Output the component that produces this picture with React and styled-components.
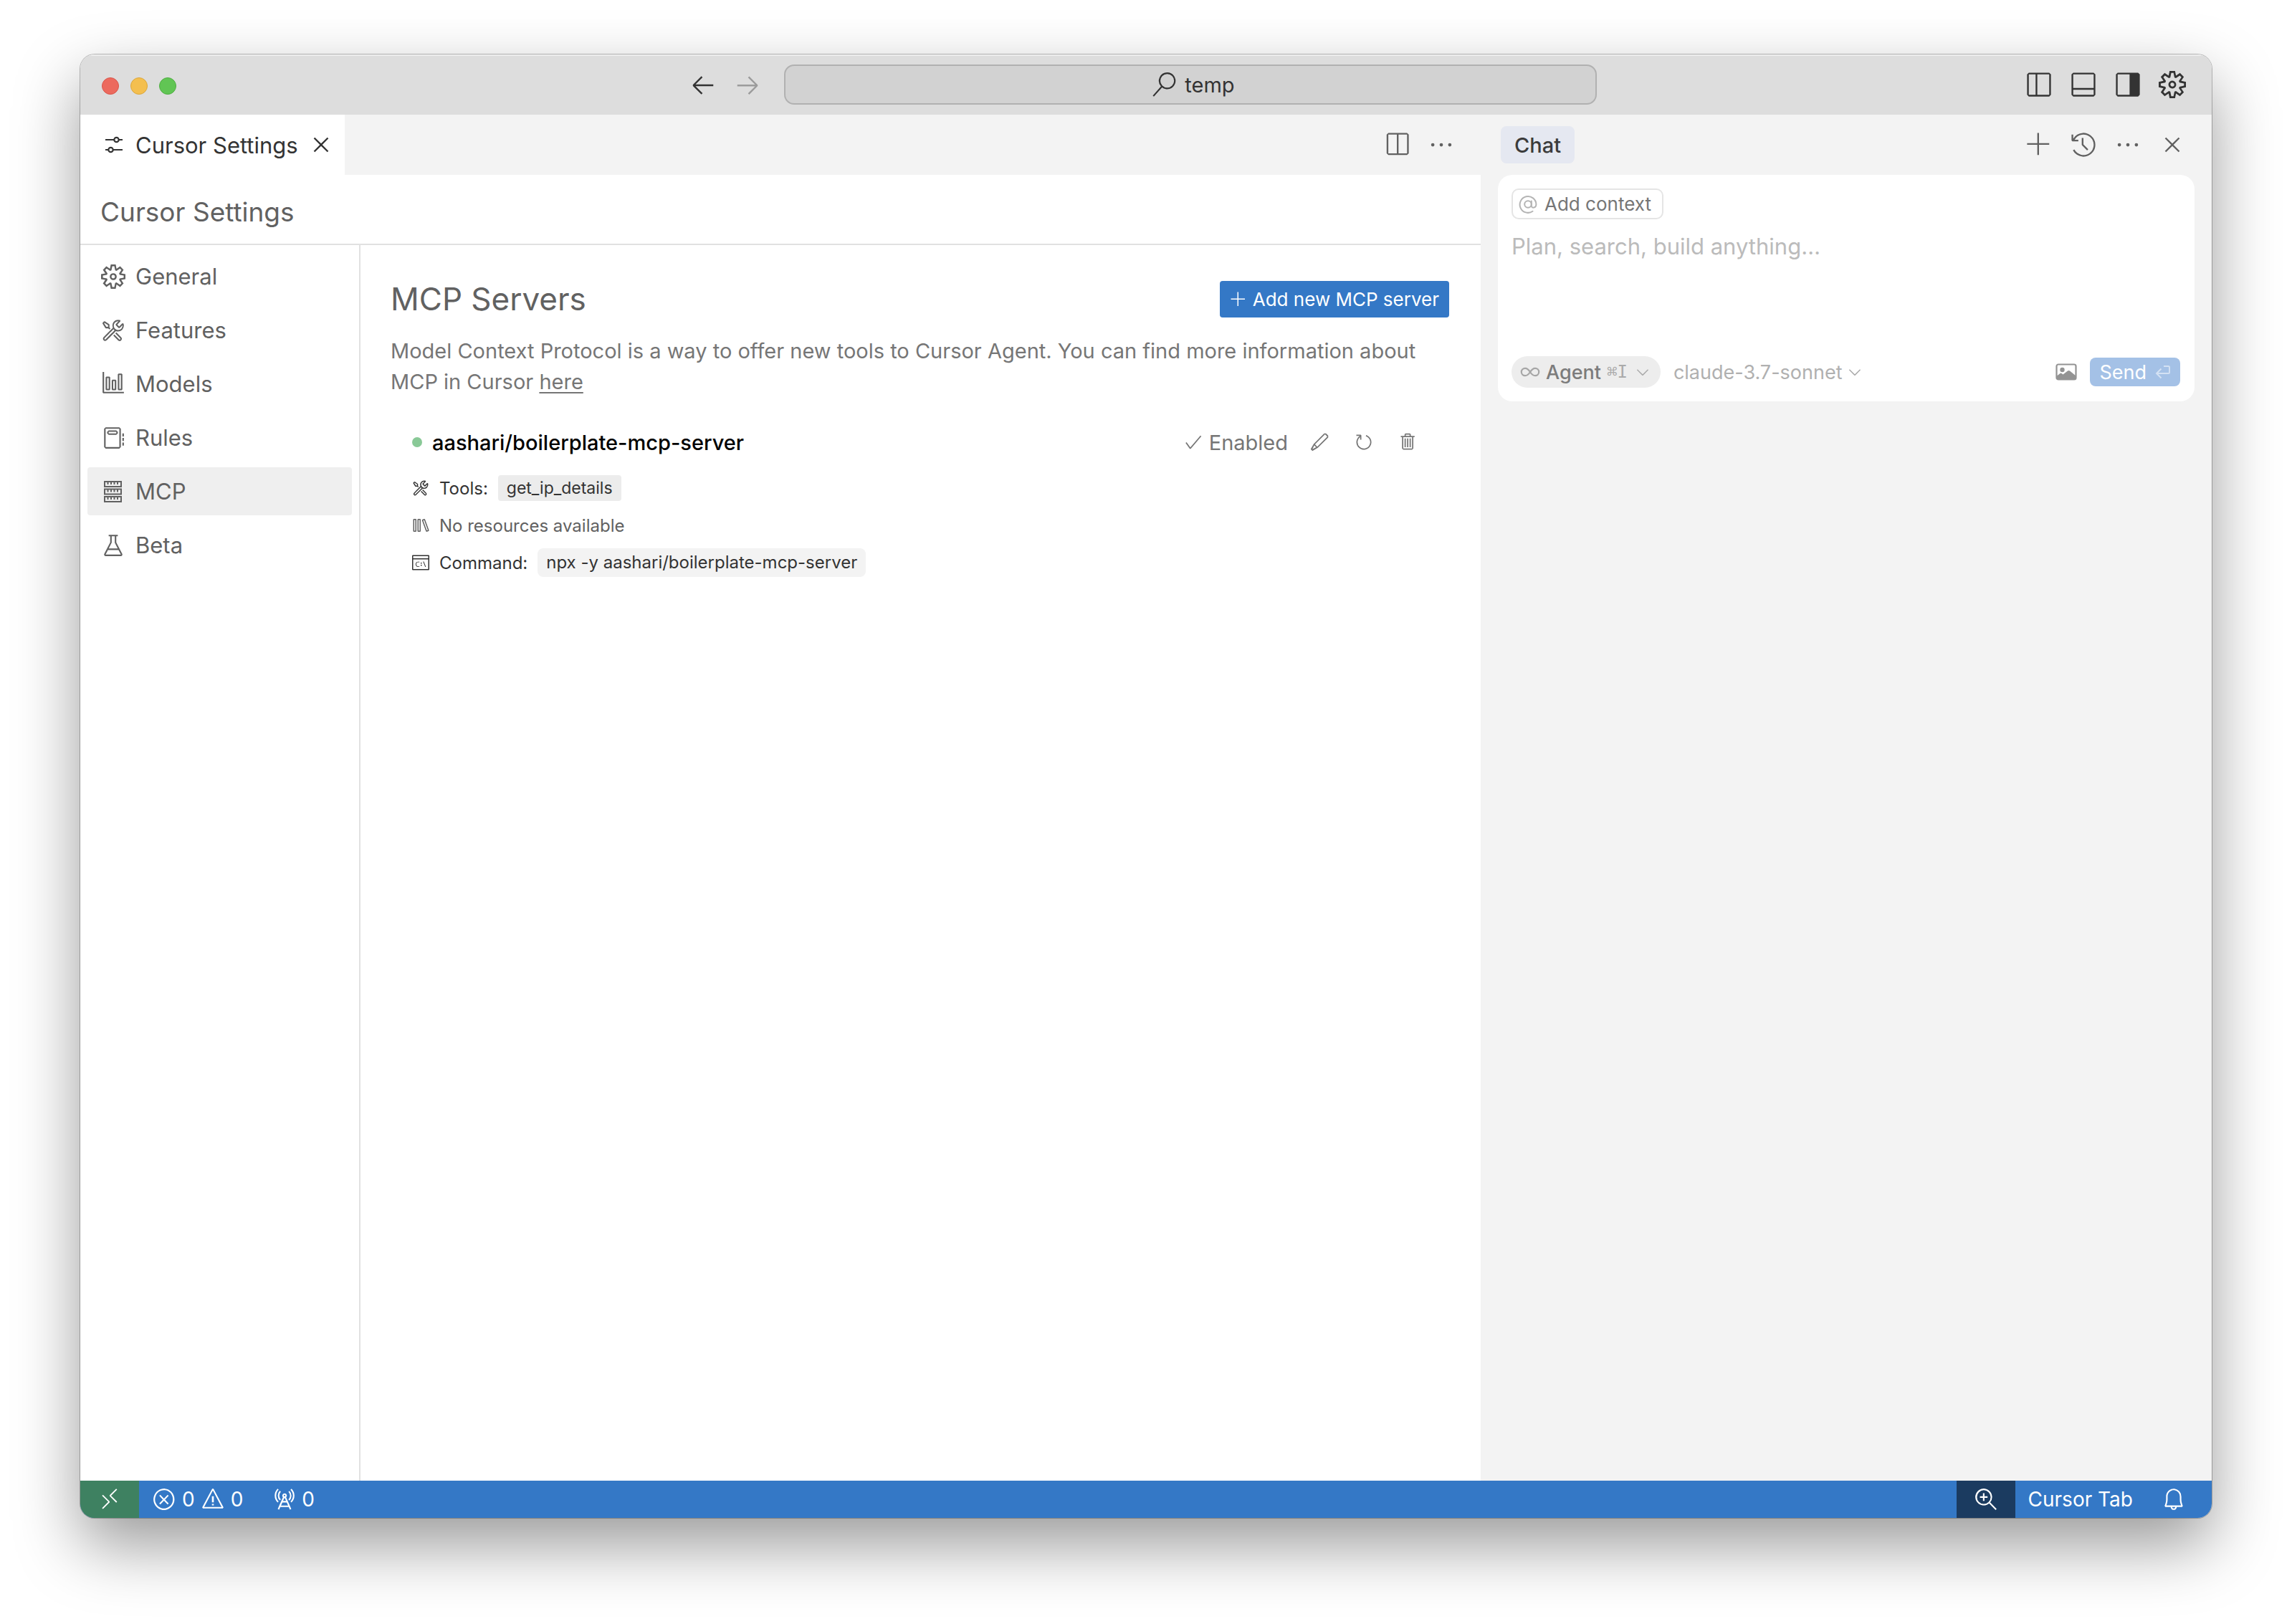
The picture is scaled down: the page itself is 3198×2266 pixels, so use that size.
import React from "react";
import styled, { createGlobalStyle } from "styled-components";
import {
  VscAdd,
  VscArrowLeft,
  VscArrowRight,
  VscBeaker,
  VscBell,
  VscCheck,
  VscChevronDown,
  VscClose,
  VscEdit,
  VscEllipsis,
  VscError,
  VscGraph,
  VscHistory,
  VscLayoutPanelOff,
  VscLayoutSidebarLeftOff,
  VscLayoutSidebarRight,
  VscLibrary,
  VscNotebook,
  VscRadioTower,
  VscRemote,
  VscSearch,
  VscSettingsGear,
  VscSplitHorizontal,
  VscTerminalCmd,
  VscTools,
  VscTrash,
  VscWarning,
  VscZoomIn,
} from "react-icons/vsc";

const color = {
  ink: "#333333",
  text: "#616161",
  muted: "#767676",
  faint: "#bbbbbb",
  line: "#e1e1e1",
  chrome: "#dddddd",
  panel: "#f3f3f3",
  blue: "#3478c6",
};

const GlobalStyle = createGlobalStyle`
  *, *::before, *::after { box-sizing: border-box; }
  body {
    margin: 0;
    background: #ffffff;
    font-family: Inter, "Noto Sans", sans-serif;
    font-size: 29px;
    color: ${color.text};
  }
  button, select, textarea {
    font: inherit;
    color: inherit;
    margin: 0;
    padding: 0;
    border: 0;
    background: none;
  }
  h1, h2, h3, p, ul { margin: 0; padding: 0; font-weight: 400; }
  svg { display: block; flex: none; }
`;

const Desktop = styled.div`
  height: 100vh;
  padding: 76px 112px 148px;
`;

const Window = styled.div`
  height: 100%;
  display: flex;
  flex-direction: column;
  border-radius: 20px;
  overflow: hidden;
  background: #ffffff;
  box-shadow: 0 0 0 1px rgba(0, 0, 0, 0.25), 0 38px 90px rgba(0, 0, 0, 0.4);
`;

const TitleBar = styled.header`
  display: grid;
  grid-template-columns: 1fr auto 1fr;
  align-items: center;
  height: 84px;
  flex: none;
  padding: 0 24px 0 30px;
  background: ${color.chrome};
  box-shadow: inset 0 2px 0 #ededed;
  color: ${color.ink};
`;

const Lights = styled.div`
  display: flex;
  gap: 16px;
  padding-top: 4px;
`;

const Light = styled.button`
  width: 24px;
  height: 24px;
  border-radius: 50%;
  background: ${(p) => p.$fill};
  border: 1px solid ${(p) => p.$edge};
`;

const CommandCenter = styled.div`
  display: flex;
  align-items: center;
  padding-right: 26px;
`;

const CommandButton = styled.button`
  display: flex;
  align-items: center;
  justify-content: center;
  gap: 12px;
  width: 1134px;
  height: 56px;
  margin-left: 20px;
  padding-left: 8px;
  border: 2px solid #b1b1b1;
  border-radius: 14px;
  background: #d2d2d2;
`;

const Actions = styled.div`
  display: flex;
  justify-content: flex-end;
  margin-left: auto;
`;

const IconButton = styled.button`
  display: flex;
  align-items: center;
  justify-content: center;
  width: ${(p) => p.$size || 62}px;
  height: ${(p) => p.$size || 62}px;
  color: ${(p) => p.$color || "inherit"};
`;

const Workbench = styled.div`
  flex: 1;
  min-height: 0;
  display: grid;
  grid-template-columns: minmax(0, 1fr) 1020px;
`;

const Editor = styled.main`
  display: flex;
  flex-direction: column;
  min-width: 0;
`;

const TabStrip = styled.div`
  display: flex;
  align-items: center;
  height: 84px;
  flex: none;
  padding-right: 24px;
  background: ${color.panel};
`;

const Tab = styled.div`
  display: flex;
  align-items: center;
  gap: 13px;
  height: 100%;
  padding: 0 14px 0 30px;
  background: #ffffff;
  color: ${color.ink};
  font-size: 31px;
`;

const PageHeader = styled.div`
  display: flex;
  align-items: center;
  height: 98px;
  padding: 6px 0 0 28px;
  border-bottom: 2px solid ${color.line};
`;

const PageTitle = styled.h1`
  font-size: 37px;
`;

const SettingsBody = styled.div`
  flex: 1;
  display: flex;
  min-height: 0;
`;

const SideNav = styled.nav`
  display: flex;
  flex-direction: column;
  gap: 8px;
  width: 391px;
  flex: none;
  padding: 10px;
  border-right: 2px solid ${color.line};
`;

const NavItem = styled.button`
  display: flex;
  align-items: center;
  gap: 14px;
  height: 67px;
  padding-left: 19px;
  border-radius: 4px;
  font-size: 31px;
  text-align: left;
  background: ${(p) => (p.$active ? "#efefef" : "transparent")};
`;

const Content = styled.section`
  flex: 1;
  min-width: 0;
  padding: 50px 44px 0 42px;
`;

const ContentHead = styled.div`
  display: flex;
  align-items: center;
  justify-content: space-between;
`;

const SectionTitle = styled.h2`
  font-size: 44px;
  line-height: 51px;
`;

const AddButton = styled.button`
  display: flex;
  align-items: center;
  gap: 8px;
  height: 51px;
  padding: 0 14px;
  border-radius: 4px;
  background: ${color.blue};
  color: #ffffff;
  font-size: 26px;
`;

const Description = styled.p`
  margin-top: 25px;
  line-height: 43px;
  color: ${color.muted};
`;

const TextLink = styled.a`
  color: inherit;
  text-decoration: underline;
  text-underline-offset: 4px;
`;

const Server = styled.article`
  display: flex;
  flex-direction: column;
  gap: 12px;
  margin-top: 43px;
  padding: 0 43px 0 30px;
  color: ${color.ink};
`;

const ServerHead = styled.div`
  display: flex;
  align-items: center;
  gap: 14px;
  height: 40px;
  margin-bottom: 12px;
`;

const StatusDot = styled.span`
  width: 14px;
  height: 14px;
  border-radius: 50%;
  background: #89c997;
`;

const ServerName = styled.h3`
  font-size: 29px;
  font-weight: 500;
  color: #000000;
`;

const ServerActions = styled.div`
  display: flex;
  align-items: center;
  gap: 30px;
  margin-left: auto;
  color: ${color.muted};
`;

const ServerTools = styled.div`
  display: flex;
  gap: 34px;
`;

const Toggle = styled.button`
  display: flex;
  align-items: center;
  gap: 8px;
`;

const Detail = styled.div`
  display: flex;
  align-items: center;
  gap: 14px;
  height: 40px;
  font-size: 24px;
  color: ${(p) => (p.$muted ? color.text : color.ink)};
`;

const ToolChip = styled.code`
  padding: 0 12px;
  border-radius: 4px;
  background: #ececec;
  font-family: inherit;
  font-size: 23px;
  line-height: 36px;
`;

const CommandChip = styled.code`
  padding: 0 12px;
  border-radius: 8px;
  background: #f3f3f3;
  font-family: inherit;
  line-height: 40px;
`;

const ChatPanel = styled.aside`
  background: ${color.panel};
  padding: 0 24px;
`;

const ChatHeader = styled.div`
  display: flex;
  align-items: center;
  height: 84px;
`;

const ChatTab = styled.button`
  height: 52px;
  margin-left: 4px;
  padding: 0 19px;
  border-radius: 8px;
  background: #e5e8f1;
  color: #3b3b3b;
  font-weight: 500;
`;

const Composer = styled.form`
  display: flex;
  flex-direction: column;
  align-items: flex-start;
  padding: 19px 20px 19px 19px;
  border-radius: 20px;
  background: #ffffff;
`;

const ContextButton = styled.button`
  display: flex;
  align-items: center;
  gap: 10px;
  height: 43px;
  padding: 0 15px 0 8px;
  border: 2px solid #e5e5e5;
  border-radius: 10px;
  font-size: 26px;
  color: ${color.muted};
`;

const Prompt = styled.textarea`
  width: 100%;
  height: 174px;
  margin-top: 17px;
  resize: none;
  outline: none;
  font-size: 31px;
  line-height: 42px;
  &::placeholder { color: ${color.faint}; opacity: 1; }
`;

const ComposerBar = styled.div`
  display: flex;
  align-items: center;
  width: 100%;
  height: 44px;
  font-size: 27px;
  color: #aaaaaa;
`;

const Picker = styled.label`
  display: flex;
  align-items: center;
  gap: ${(p) => (p.$filled ? 8 : 4)}px;
  height: 44px;
  padding: 0 12px;
  margin-right: 6px;
  border-radius: 22px;
  background: ${(p) => (p.$filled ? "#ededed" : "transparent")};
`;

const PickerSelect = styled.select`
  appearance: none;
  font-weight: ${(p) => (p.$strong ? 500 : 400)};
  color: ${(p) => (p.$strong ? "#7c7c7c" : "#b0b0b0")};
  outline: none;
`;

const Shortcut = styled.kbd`
  font-family: "DejaVu Sans Mono", monospace;
  font-size: 24px;
`;

const SendButton = styled.button`
  display: flex;
  align-items: center;
  gap: 12px;
  height: 40px;
  margin-left: 16px;
  padding: 0 13px;
  border-radius: 8px;
  background: #a4c1e6;
  color: #ffffff;
`;

const StatusBar = styled.footer`
  display: flex;
  align-items: stretch;
  height: 52px;
  flex: none;
  padding-right: 36px;
  background: ${color.blue};
  color: #ffffff;
  font-size: 28px;
`;

const StatusBlock = styled.button`
  display: flex;
  align-items: center;
  justify-content: center;
  width: 82px;
  background: ${(p) => p.$fill};
`;

const StatusItem = styled.button`
  display: flex;
  align-items: center;
  gap: 8px;
  margin-left: ${(p) => p.$gap}px;
`;

const Spacer = styled.div`
  flex: 1;
`;

const SlidersIcon = () => (
  <svg width="34" height="34" viewBox="0 0 34 34" fill="none" stroke="currentColor" strokeWidth="2.2" aria-hidden="true">
    <path d="M5 10h12M24 10h5M5 24h5M16 24h13" />
    <circle cx="20.5" cy="10" r="3.2" />
    <circle cx="12.5" cy="24" r="3.2" />
  </svg>
);

const RackIcon = () => (
  <svg width="34" height="34" viewBox="0 0 34 34" fill="none" stroke="currentColor" strokeWidth="2" aria-hidden="true">
    <path d="M5 3h23v7H5zM5 13.500h23v7H5zM5 24h23v7H5z" />
    <path d="M9.500 3v4M14 3v4M18.500 3v4M23 3v4M9.500 13.500v4M14 13.500v4M18.500 13.500v4M23 13.500v4M9.500 24v4M14 24v4M18.500 24v4M23 24v4" />
  </svg>
);

const RefreshIcon = () => (
  <svg width="28" height="28" viewBox="0 0 16 16" fill="currentColor" aria-hidden="true">
    <path d="M4.681 3H2V2h3.5l.5.5V6H5V4a5 5 0 1 0 4.530-.761l.302-.954A6 6 0 1 1 4.681 3z" />
  </svg>
);

const AtIcon = () => (
  <svg width="26" height="26" viewBox="0 0 26 26" fill="none" stroke="#b4b4b4" strokeWidth="2" strokeLinecap="round" aria-hidden="true">
    <circle cx="13" cy="13" r="4.800" />
    <path d="M17.800 8.500v6.500c0 4.200 6.600 3.400 6.600-2A11.400 11.400 0 1 0 19.500 22.800" />
  </svg>
);

const InfinityIcon = () => (
  <svg width="28" height="26" viewBox="0 0 28 26" fill="none" stroke="#a6a6a6" strokeWidth="2.200" aria-hidden="true">
    <path d="M14 13c-2-3.200-4.200-5.200-7-5.200a5.200 5.200 0 0 0 0 10.400c2.800 0 5-2 7-5.200s4.200-5.200 7-5.200a5.200 5.200 0 0 1 0 10.400c-2.800 0-5-2-7-5.200z" />
  </svg>
);

const ImageIcon = () => (
  <svg width="30" height="24" viewBox="0 0 30 24" aria-hidden="true">
    <rect x="1.500" y="1.500" width="27" height="21" rx="2.500" fill="none" stroke="#939393" strokeWidth="2.200" />
    <circle cx="9.500" cy="9" r="3.200" fill="#939393" />
    <path d="M2 17.500l4.500-3.500q1-.8 2 0l2 1.500 6.500-5q1.500-1 3 0l8.500 7V22H2z" fill="#939393" />
  </svg>
);

const ReturnIcon = () => (
  <svg width="22" height="20" viewBox="0 0 22 20" fill="none" stroke="#d3e1f3" strokeWidth="2" aria-hidden="true">
    <path d="M12 2h6.500q1.500 0 1.500 1.500v7q0 1.500-1.500 1.500H2M8.500 5.500L2 12l6.500 6.500" />
  </svg>
);

const sections = [
  { label: "General", Icon: VscSettingsGear },
  { label: "Features", Icon: VscTools },
  { label: "Models", Icon: VscGraph },
  { label: "Rules", Icon: VscNotebook },
  { label: "MCP", Icon: RackIcon, active: true },
  { label: "Beta", Icon: VscBeaker },
];

export default function App() {
  return (
    <>
      <GlobalStyle />
      <Desktop>
        <Window>
          <TitleBar>
            <Lights>
              <Light aria-label="Close window" $fill="#ec6a5e" $edge="#d9564b" />
              <Light aria-label="Minimize window" $fill="#f4bf4f" $edge="#dba73c" />
              <Light aria-label="Zoom window" $fill="#61c554" $edge="#4fae42" />
            </Lights>
            <CommandCenter>
              <IconButton aria-label="Go back"><VscArrowLeft size={38} /></IconButton>
              <IconButton aria-label="Go forward" $color="#9b9b9b"><VscArrowRight size={38} /></IconButton>
              <CommandButton>
                <VscSearch size={34} />
                temp
              </CommandButton>
            </CommandCenter>
            <Actions>
              <IconButton aria-label="Toggle primary side bar"><VscLayoutSidebarLeftOff size={38} /></IconButton>
              <IconButton aria-label="Toggle panel"><VscLayoutPanelOff size={38} /></IconButton>
              <IconButton aria-label="Toggle chat"><VscLayoutSidebarRight size={38} /></IconButton>
              <IconButton aria-label="Open settings"><VscSettingsGear size={38} /></IconButton>
            </Actions>
          </TitleBar>

          <Workbench>
            <Editor>
              <TabStrip>
                <Tab>
                  <SlidersIcon />
                  Cursor Settings
                  <IconButton aria-label="Close tab" $size={38}><VscClose size={38} /></IconButton>
                </Tab>
                <Actions>
                  <IconButton aria-label="Split editor"><VscSplitHorizontal size={38} /></IconButton>
                  <IconButton aria-label="More editor actions"><VscEllipsis size={38} /></IconButton>
                </Actions>
              </TabStrip>
              <PageHeader>
                <PageTitle>Cursor Settings</PageTitle>
              </PageHeader>
              <SettingsBody>
                <SideNav aria-label="Settings sections">
                  {sections.map(({ label, Icon, active }) => (
                    <NavItem key={label} $active={active} aria-current={active ? "page" : undefined}>
                      <Icon size={34} />
                      {label}
                    </NavItem>
                  ))}
                </SideNav>
                <Content>
                  <ContentHead>
                    <SectionTitle>MCP Servers</SectionTitle>
                    <AddButton>
                      <VscAdd size={24} />
                      Add new MCP server
                    </AddButton>
                  </ContentHead>
                  <Description>
                    Model Context Protocol is a way to offer new tools to Cursor Agent. You can find more
                    information about MCP in Cursor <TextLink href="#mcp">here</TextLink>
                  </Description>
                  <Server>
                    <ServerHead>
                      <StatusDot />
                      <ServerName>aashari/boilerplate-mcp-server</ServerName>
                      <ServerActions>
                        <Toggle><VscCheck size={28} />Enabled</Toggle>
                        <ServerTools>
                          <IconButton aria-label="Edit server" $size={28}><VscEdit size={28} /></IconButton>
                          <IconButton aria-label="Restart server" $size={28}><RefreshIcon /></IconButton>
                          <IconButton aria-label="Delete server" $size={28}><VscTrash size={28} /></IconButton>
                        </ServerTools>
                      </ServerActions>
                    </ServerHead>
                    <Detail>
                      <VscTools size={24} />
                      Tools:
                      <ToolChip>get_ip_details</ToolChip>
                    </Detail>
                    <Detail $muted>
                      <VscLibrary size={24} />
                      No resources available
                    </Detail>
                    <Detail>
                      <VscTerminalCmd size={24} />
                      Command:
                      <CommandChip>npx -y aashari/boilerplate-mcp-server</CommandChip>
                    </Detail>
                  </Server>
                </Content>
              </SettingsBody>
            </Editor>

            <ChatPanel>
              <ChatHeader>
                <ChatTab>Chat</ChatTab>
                <Actions>
                  <IconButton aria-label="New chat"><VscAdd size={38} /></IconButton>
                  <IconButton aria-label="Chat history"><VscHistory size={38} /></IconButton>
                  <IconButton aria-label="More chat actions"><VscEllipsis size={38} /></IconButton>
                  <IconButton aria-label="Close chat"><VscClose size={38} /></IconButton>
                </Actions>
              </ChatHeader>
              <Composer onSubmit={(e) => e.preventDefault()}>
                <ContextButton type="button">
                  <AtIcon />
                  Add context
                </ContextButton>
                <Prompt aria-label="Message" placeholder="Plan, search, build anything…" />
                <ComposerBar>
                  <Picker $filled>
                    <InfinityIcon />
                    <PickerSelect aria-label="Mode" $strong>
                      <option>Agent</option>
                    </PickerSelect>
                    <Shortcut>⌘I</Shortcut>
                    <VscChevronDown size={26} />
                  </Picker>
                  <Picker>
                    <PickerSelect aria-label="Model">
                      <option>claude-3.7-sonnet</option>
                    </PickerSelect>
                    <VscChevronDown size={26} />
                  </Picker>
                  <Spacer />
                  <IconButton type="button" aria-label="Attach image" $size={34}><ImageIcon /></IconButton>
                  <SendButton>
                    Send
                    <ReturnIcon />
                  </SendButton>
                </ComposerBar>
              </Composer>
            </ChatPanel>
          </Workbench>

          <StatusBar>
            <StatusBlock aria-label="Open remote window" $fill="#3e8161"><VscRemote size={34} /></StatusBlock>
            <StatusItem $gap={18}>
              <VscError size={34} />
              0
              <VscWarning size={34} />
              0
            </StatusItem>
            <StatusItem $gap={40}>
              <VscRadioTower size={34} />
              0
            </StatusItem>
            <Spacer />
            <StatusBlock aria-label="Reset zoom" $fill="#1b3b60"><VscZoomIn size={34} /></StatusBlock>
            <StatusItem $gap={18}>Cursor Tab</StatusItem>
            <StatusItem $gap={40} aria-label="Notifications"><VscBell size={34} /></StatusItem>
          </StatusBar>
        </Window>
      </Desktop>
    </>
  );
}
